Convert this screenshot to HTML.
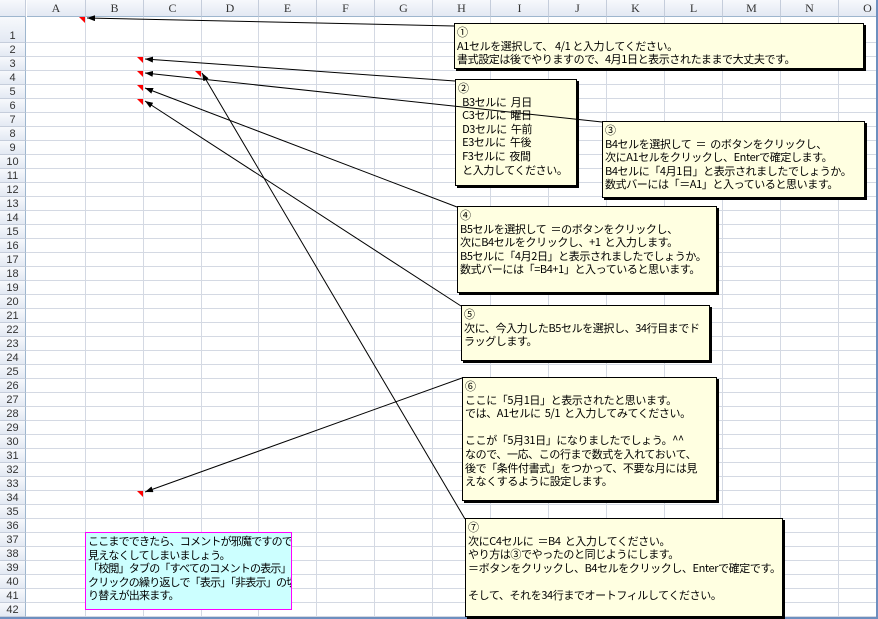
<!DOCTYPE html><html><head><meta charset="utf-8"><style>
body{margin:0;width:878px;height:619px;overflow:hidden;background:#fff;position:relative;font-family:"Liberation Sans","Noto Sans CJK JP",sans-serif}
.ch,.rh{position:absolute;background:linear-gradient(#f7f9fc,#e3e9f3);color:#333;font-size:12px;text-align:center;font-family:"Liberation Serif",serif}
.ch{top:0;height:16px;line-height:17px;border-right:1px solid #c5cddb;border-bottom:1px solid #9eb6ce}
.rh{left:0;width:25px;border-right:1px solid #9eb6ce;border-bottom:1px solid #c5cddb;font-size:11px;font-family:"Liberation Sans",sans-serif;line-height:14px}
.c{position:absolute;background:#ffffe1;border:1px solid #000;box-shadow:2px 2px 0 #000;font-size:11px;line-height:13.6px;padding:2px 2px;white-space:pre;color:#000;letter-spacing:-0.4px;font-family:"Noto Sans CJK JP",sans-serif;overflow:hidden}
</style></head><body>
<svg width="878" height="619" style="position:absolute;left:0;top:0">
<g stroke="#d4d9e3" stroke-width="1">
<line x1="85.5" y1="17" x2="85.5" y2="617"/><line x1="143.5" y1="17" x2="143.5" y2="617"/><line x1="201.5" y1="17" x2="201.5" y2="617"/><line x1="258.5" y1="17" x2="258.5" y2="617"/><line x1="316.5" y1="17" x2="316.5" y2="617"/><line x1="374.5" y1="17" x2="374.5" y2="617"/><line x1="432.5" y1="17" x2="432.5" y2="617"/><line x1="490.5" y1="17" x2="490.5" y2="617"/><line x1="548.5" y1="17" x2="548.5" y2="617"/><line x1="606.5" y1="17" x2="606.5" y2="617"/><line x1="664.5" y1="17" x2="664.5" y2="617"/><line x1="722.5" y1="17" x2="722.5" y2="617"/><line x1="780.5" y1="17" x2="780.5" y2="617"/><line x1="838.5" y1="17" x2="838.5" y2="617"/>
</g>
<g id="rows" stroke="#d4d9e3"></g>
</svg>
<div id="hdr"></div>
<div style="position:absolute;right:0;top:0;width:2px;height:619px;background:#6e8fbf"></div>
<div style="position:absolute;left:0;bottom:0;width:878px;height:2px;background:#6e8fbf"></div>

<div class="c" style="left:454px;top:23px;width:404px;height:40px">①
A1セルを選択して、 4/1 と入力してください。
書式設定は後でやりますので、4月1日と表示されたままで大丈夫です。</div>
<div class="c" style="left:455px;top:79px;width:116px;height:101px">②
  B3セルに  月日
  C3セルに  曜日
  D3セルに  午前
  E3セルに  午後
  F3セルに  夜間
  と入力してください。</div>
<div class="c" style="left:602px;top:121px;width:257px;height:71px">③
B4セルを選択して  ＝  のボタンをクリックし、
次にA1セルをクリックし、Enterで確定します。
B4セルに「4月1日」と表示されましたでしょうか。
数式バーには「＝A1」と入っていると思います。</div>
<div class="c" style="left:457px;top:206px;width:254px;height:81px">④
B5セルを選択して  ＝のボタンをクリックし、
次にB4セルをクリックし、+1  と入力します。
B5セルに「4月2日」と表示されましたでしょうか。
数式バーには「=B4+1」と入っていると思います。</div>
<div class="c" style="left:461px;top:305px;width:243px;height:50px">⑤
次に、今入力したB5セルを選択し、34行目までド
ラッグします。</div>
<div class="c" style="left:462px;top:377px;width:249px;height:118px">⑥
ここに「5月1日」と表示されたと思います。
では、A1セルに  5/1  と入力してみてください。

ここが「5月31日」になりましたでしょう。^^
なので、一応、この行まで数式を入れておいて、
後で「条件付書式」をつかって、不要な月には見
えなくするように設定します。</div>
<div class="c" style="left:465px;top:518px;width:312px;height:93px">⑦
次にC4セルに  ＝B4  と入力してください。
やり方は③でやったのと同じようにします。
＝ボタンをクリックし、B4セルをクリックし、Enterで確定です。

そして、それを34行までオートフィルしてください。</div>
<div class="c" style="left:85px;top:532px;width:201px;height:72px;background:#ccffff;border-color:#ff00ff;box-shadow:none;letter-spacing:-0.8px">ここまでできたら、コメントが邪魔ですので、
見えなくしてしまいましょう。
「校閲」タブの「すべてのコメントの表示」の
クリックの繰り返しで「表示」「非表示」の切
り替えが出来ます。</div>

<svg width="878" height="619" style="position:absolute;left:0;top:0;pointer-events:none">
<defs><marker id="a" markerWidth="8" markerHeight="6" refX="8" refY="3" orient="auto-start-reverse" markerUnits="userSpaceOnUse"><path d="M8,3 L0,0 L0,6 Z" fill="#000"/></marker></defs>
<g fill="#f00"><path d="M79,17 L85,17 L85,23Z"/><path d="M137,57 L143,57 L143,63Z"/><path d="M137,71 L143,71 L143,77Z"/><path d="M137,85 L143,85 L143,91Z"/><path d="M137,99 L143,99 L143,105Z"/><path d="M195,71 L201,71 L201,77Z"/><path d="M137,491 L143,491 L143,497Z"/></g>
<g stroke="#000" stroke-width="1" fill="none">
<line x2="454" y2="26" x1="87" y1="18" marker-start="url(#a)"/>
<line x2="455" y2="81" x1="145" y1="59" marker-start="url(#a)"/>
<line x2="602" y2="122" x1="145" y1="73" marker-start="url(#a)"/>
<line x2="457" y2="207" x1="145" y1="88" marker-start="url(#a)"/>
<line x2="461" y2="306" x1="145" y1="101" marker-start="url(#a)"/>
<line x2="465" y2="519" x1="202" y1="73" marker-start="url(#a)"/>
<line x2="462" y2="378" x1="145" y1="492" marker-start="url(#a)"/>
</g></svg>
<script>
var r=document.getElementById('rows'),s='';
s+='<line x1="26" y1="42.5" x2="878" y2="42.5"/>';
for(var n=2;n<=42;n++){var y=43+(n-2)*14+13.5;s+='<line x1="26" y1="'+y+'" x2="878" y2="'+y+'"/>';}
r.innerHTML=s;
var h='<div class="ch" style="left:0;width:25px"></div>';
var L='ABCDEFGHIJKLMNO',b=[26,85,143,201,258,316,374,432,490,548,606,664,722,780,838,896];
for(var i=0;i<15;i++)h+='<div class="ch" style="left:'+(b[i]+1)+'px;width:'+(b[i+1]-b[i]-1)+'px">'+L[i]+'</div>';
h+='<div class="rh" style="top:17px;height:25px;line-height:38px">1</div>';
for(var n=2;n<=42;n++)h+='<div class="rh" style="top:'+(43+(n-2)*14)+'px;height:13px;line-height:15px">'+n+'</div>';
document.getElementById('hdr').innerHTML=h;
</script>
</body></html>
